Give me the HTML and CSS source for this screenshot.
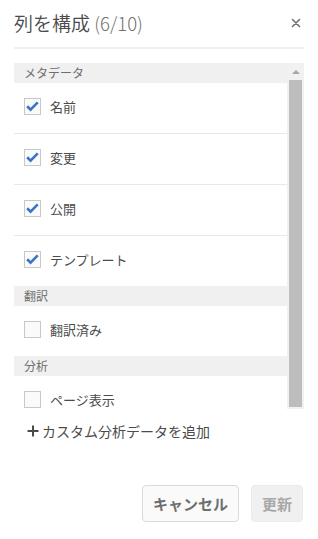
FILE: index.html
```html
<!DOCTYPE html>
<html lang="ja">

<head>
    <meta charset="UTF-8">
    <meta name="viewport" content="width=device-width, initial-scale=1.0">
    <title>列を構成</title>
    <link rel="stylesheet" href="styles.css">
</head>

<body>
    <div class="dialog">
        <div class="head">
            <h1>列を構成 <span class="count">(6/10)</span></h1>
            <button class="close" aria-label="閉じる">
                <svg width="10" height="10" viewBox="0 0 10 10">
                    <path d="M1.5 1.5 L8.5 8.5 M8.5 1.5 L1.5 8.5" stroke="#6e6e6e" stroke-width="1.6" stroke-linecap="round" />
                </svg>
            </button>
        </div>

        <div class="scroller">
            <div class="list">
                <div class="group">メタデータ</div>
                <label class="row"><span class="box on"><svg viewBox="0 0 16 16"><path d="M2.3 7.8 L5.9 11.3 L13.6 3.6" /></svg></span>名前</label>
                <label class="row"><span class="box on"><svg viewBox="0 0 16 16"><path d="M2.3 7.8 L5.9 11.3 L13.6 3.6" /></svg></span>変更</label>
                <label class="row"><span class="box on"><svg viewBox="0 0 16 16"><path d="M2.3 7.8 L5.9 11.3 L13.6 3.6" /></svg></span>公開</label>
                <label class="row last"><span class="box on"><svg viewBox="0 0 16 16"><path d="M2.3 7.8 L5.9 11.3 L13.6 3.6" /></svg></span>テンプレート</label>
                <div class="group">翻訳</div>
                <label class="row last"><span class="box"></span>翻訳済み</label>
                <div class="group">分析</div>
                <label class="row last"><span class="box"></span>ページ表示</label>
            </div>
            <div class="bar">
                <div class="arrow"></div>
                <div class="thumb"></div>
            </div>
        </div>

        <a class="add">
            <svg class="plus" width="12" height="12" viewBox="0 0 12 12">
                <path d="M6 0.5 V11.5 M0.5 6 H11.5" stroke="#4b4b4b" stroke-width="2" />
            </svg>カスタム分析データを追加</a>

        <div class="foot">
            <button class="btn">キャンセル</button>
            <button class="btn off">更新</button>
        </div>
    </div>
</body>

</html>
```

FILE: styles.css
```css
* {
    margin: 0;
    padding: 0;
    box-sizing: border-box;
}

body {
    background: #fff;
    font-family: "Noto Sans CJK JP", "Noto Sans", sans-serif;
    color: #4b4b4b;
}

.dialog {
    padding: 0 14px;
}

.head {
    display: flex;
    align-items: center;
    justify-content: space-between;
    height: 49px;
    padding-bottom: 1px;
    border-bottom: 2px solid #f0f0f0;
}

.head h1 {
    font-size: 19px;
    font-weight: 350;
    line-height: 24px;
    color: #4b4b4b;
}

.head .count {
    color: #707070;
    font-weight: 300;
    font-size: 18.5px;
}

.close {
    border: none;
    background: none;
    width: 18px;
    height: 18px;
    display: flex;
    align-items: center;
    justify-content: center;
    margin-right: -1px;
}

.scroller {
    display: flex;
    height: 346px;
    margin-top: 14px;
}

.list {
    flex: 1;
    overflow: hidden;
}

.group {
    height: 20px;
    line-height: 19px;
    padding-left: 10px;
    background: #f0f0f0;
    font-size: 12px;
    color: #6e6e6e;
}

.row {
    display: flex;
    align-items: center;
    height: 51px;
    padding-left: 10px;
    padding-bottom: 3px;
    border-bottom: 1px solid #e8e8e8;
    font-size: 13px;
    color: #4b4b4b;
}

.row.last {
    height: 50px;
    border-bottom: none;
}

.box {
    width: 17px;
    height: 17px;
    border: 1px solid #c8c8c8;
    background: #fafafa;
    margin-right: 9px;
    flex: none;
    display: flex;
}

.box svg {
    width: 15px;
    height: 15px;
}

.box path {
    fill: none;
    stroke: #3a73c8;
    stroke-width: 2.8;
}

.bar {
    width: 17px;
    background: #f1f1f1;
    display: flex;
    flex-direction: column;
    align-items: center;
    padding-bottom: 2px;
}

.arrow {
    height: 17px;
    width: 100%;
    display: flex;
    align-items: center;
    justify-content: center;
}

.arrow::before {
    content: "";
    border-left: 4px solid transparent;
    border-right: 4px solid transparent;
    border-bottom: 4px solid #a3a3a3;
}

.thumb {
    flex: 1;
    width: 13px;
    background: #bdbdbd;
}

.add {
    display: flex;
    align-items: center;
    margin-top: 12px;
    padding-left: 13px;
    font-size: 14px;
    color: #4b4b4b;
    height: 20px;
}

.add .plus {
    margin-right: 3px;
}

.foot {
    display: flex;
    justify-content: flex-end;
    gap: 12px;
    margin-top: 44px;
    padding-right: 1px;
}

.btn {
    height: 37px;
    padding: 0 10px;
    border: 1px solid #dadada;
    border-radius: 4px;
    background: #fafafa;
    font-family: "Noto Sans CJK JP", sans-serif;
    font-size: 15px;
    font-weight: 700;
    color: #6e6e6e;
}

.btn.off {
    background: #f0f0f0;
    border-color: #ebebeb;
    color: #a8a8a8;
}
```
